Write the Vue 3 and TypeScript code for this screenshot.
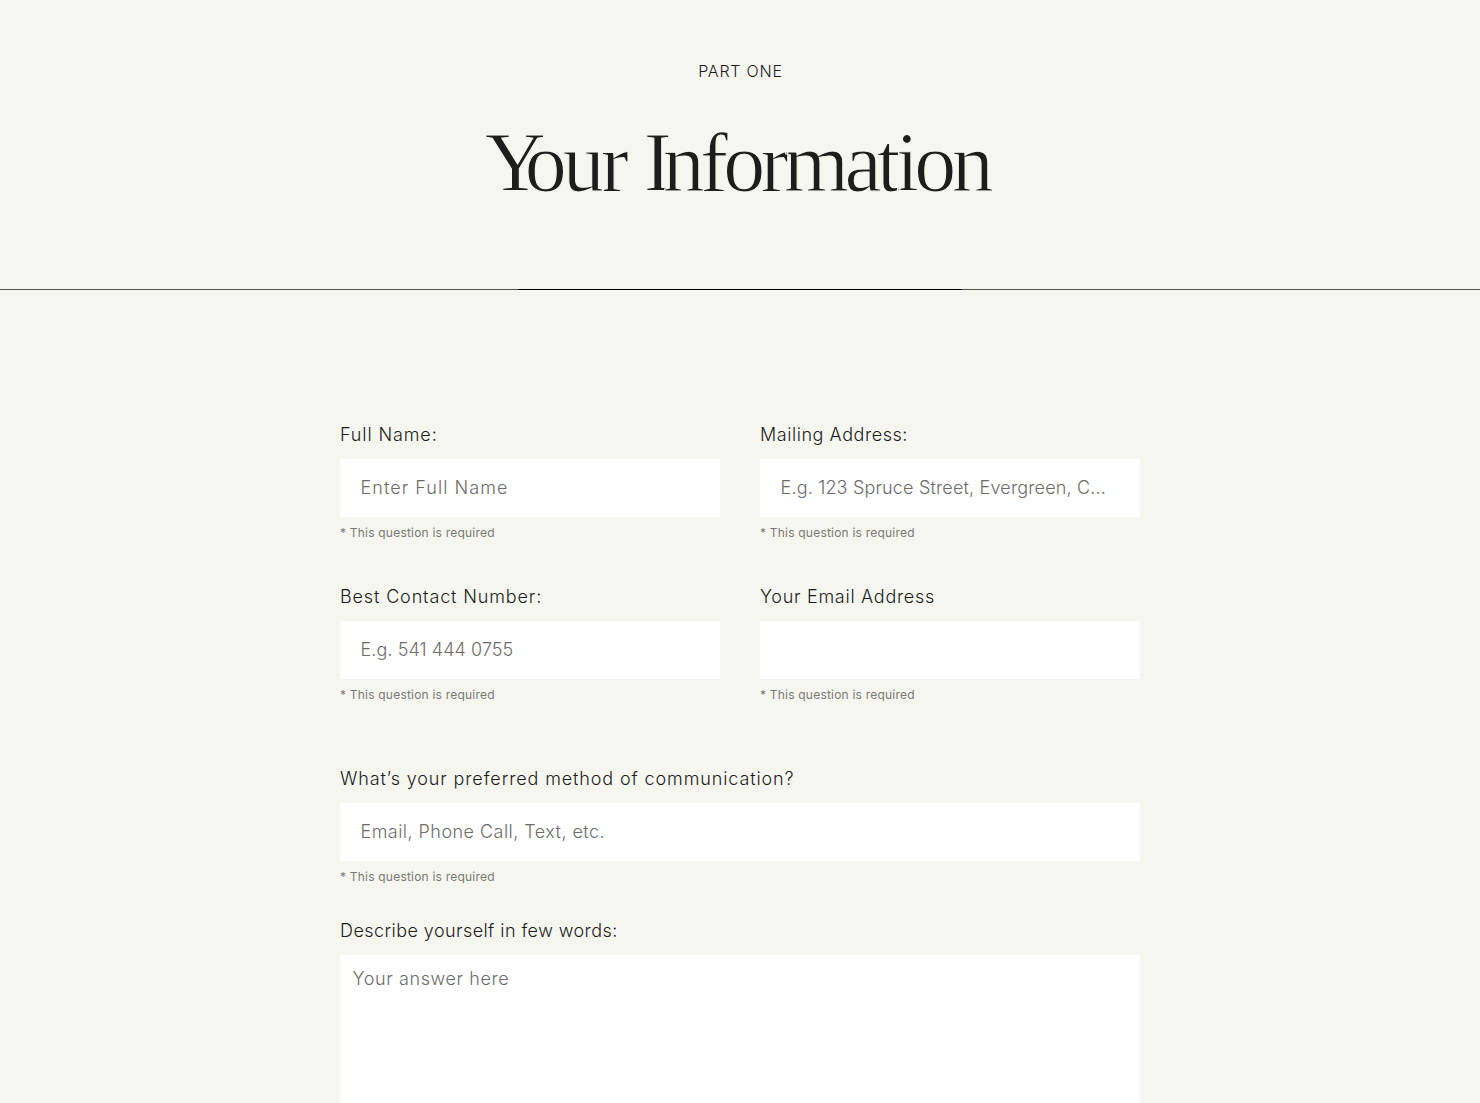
<script setup lang="ts">
interface Field {
  id: string
  label: string
  labelSpacing: number
  placeholder: string
  placeholderSpacing: number
}

const required = '* This question is required'

const shortFields: Field[] = [
  { id: 'name', label: 'Full Name:', labelSpacing: 0.88, placeholder: 'Enter Full Name', placeholderSpacing: 1.05 },
  { id: 'address', label: 'Mailing Address:', labelSpacing: 0.55, placeholder: 'E.g. 123 Spruce Street, Evergreen, C...', placeholderSpacing: 0.17 },
  { id: 'phone', label: 'Best Contact Number:', labelSpacing: 0.86, placeholder: 'E.g. 541 444 0755', placeholderSpacing: 0.07 },
  { id: 'email', label: 'Your Email Address', labelSpacing: 0.72, placeholder: '', placeholderSpacing: 0 },
]

const method: Field = {
  id: 'method',
  label: 'What’s your preferred method of communication?',
  labelSpacing: 0.88,
  placeholder: 'Email, Phone Call, Text, etc.',
  placeholderSpacing: 0.46,
}
</script>

<template>
  <main class="page">
    <header class="intro">
      <p class="part">PART ONE</p>
      <h1 class="title"><span class="first"><span class="cap-y">Y</span>our</span> <span class="second"><span class="cap-i">I</span>nformation</span></h1>
    </header>
    <div class="progress"><div class="progress-bar"></div></div>

    <form class="form" @submit.prevent>
      <div class="grid">
        <div v-for="f in shortFields" :key="f.id" class="field">
          <label class="label" :for="f.id" :style="{ letterSpacing: f.labelSpacing + 'px' }">{{ f.label }}</label>
          <input :id="f.id" class="input" type="text" :placeholder="f.placeholder" :style="{ letterSpacing: f.placeholderSpacing + 'px' }" />
          <p class="note">{{ required }}</p>
        </div>
      </div>

      <div class="field method">
        <label class="label" :for="method.id" :style="{ letterSpacing: method.labelSpacing + 'px' }">{{ method.label }}</label>
        <input :id="method.id" class="input" type="text" :placeholder="method.placeholder" :style="{ letterSpacing: method.placeholderSpacing + 'px' }" />
        <p class="note">{{ required }}</p>
      </div>

      <div class="field about">
        <label class="label about-label" for="about">Describe yourself in few words:</label>
        <textarea id="about" class="textarea" placeholder="Your answer here"></textarea>
      </div>
    </form>
  </main>
</template>

<style>
body {
  margin: 0;
  background: #f5f6f0;
}
</style>

<style scoped>
.page {
  box-sizing: border-box;
  height: 1103px;
  overflow: hidden;
  background: #f5f6f0;
  color: #1d1d1b;
  font-family: Inter, "Open Sans", sans-serif;
  font-weight: 300;
}
.intro {
  box-sizing: border-box;
  height: 289px;
  padding-top: 59px;
  text-align: center;
}
.part {
  margin: 0;
  padding-left: 1px;
  font-size: 16px;
  line-height: 24px;
  letter-spacing: 0.8px;
}
.title {
  margin: 30px 0 0;
  padding-right: 6px;
  font: 400 84px/100px "Liberation Serif", serif;
  white-space: nowrap;
  word-spacing: -2px;
  -webkit-text-stroke: 1.1px #f5f6f0;
}
.first {
  letter-spacing: -4px;
}
.cap-y {
  letter-spacing: -21px;
}
.second {
  letter-spacing: -4.7px;
}
.cap-i {
  letter-spacing: -9px;
}
.progress {
  height: 1px;
  background: #54534c;
}
.progress-bar {
  width: 30%;
  height: 1px;
  margin: 0 auto;
  background: #000;
}
.form {
  width: 800px;
  margin: 0 auto;
  padding-top: 133px;
}
.grid {
  display: grid;
  grid-template-columns: 1fr 1fr;
  column-gap: 40px;
}
.field {
  display: flex;
  flex-direction: column;
  height: 162px;
}
.method {
  height: 152px;
  margin-top: 20px;
}
.about {
  height: auto;
}
.label {
  height: 36px;
  font-size: 18px;
  line-height: 24px;
  white-space: nowrap;
}
.about-label {
  letter-spacing: 0.43px;
}
.input,
.textarea {
  box-sizing: border-box;
  width: 100%;
  border: 0;
  border-radius: 0;
  outline: 0;
  background: #fff;
  color: #1d1d1b;
  font: inherit;
  font-size: 18px;
}
.input {
  height: 58px;
  padding: 0 20.5px 2px;
}
.textarea {
  height: 200px;
  padding: 12px 12.5px;
  line-height: 24px;
  letter-spacing: 0.61px;
  resize: none;
}
.input::placeholder,
.textarea::placeholder {
  color: #6c6c6c;
  opacity: 1;
}
.note {
  margin: 8px 0 0;
  color: #797974;
  font-size: 12px;
  font-weight: 400;
  line-height: 16px;
  letter-spacing: 0.21px;
}
</style>
